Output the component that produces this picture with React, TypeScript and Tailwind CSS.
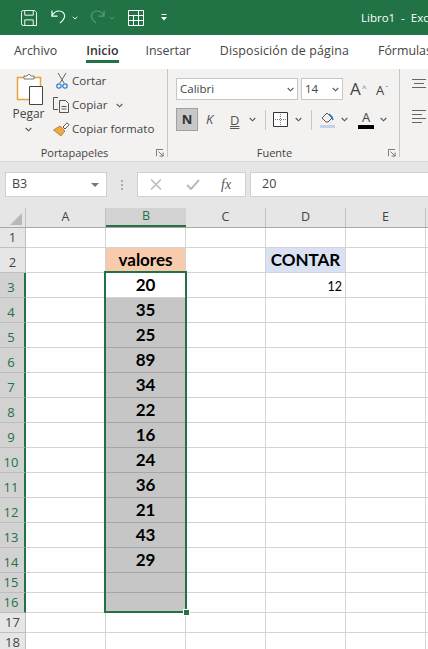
const ui = "font-['Open_Sans','Noto_Sans',sans-serif]";
const cols = ['A', 'B', 'C', 'D', 'E'];

const rows = [
  { n: 1, h: 'h-[20px]' },
  { n: 2, h: 'h-[25px]' },
  { n: 3, h: 'h-[25px]', b: '20', d: '12' },
  { n: 4, h: 'h-[25px]', b: '35' },
  { n: 5, h: 'h-[25px]', b: '25' },
  { n: 6, h: 'h-[25px]', b: '89' },
  { n: 7, h: 'h-[25px]', b: '34' },
  { n: 8, h: 'h-[25px]', b: '22' },
  { n: 9, h: 'h-[25px]', b: '16' },
  { n: 10, h: 'h-[25px]', b: '24' },
  { n: 11, h: 'h-[25px]', b: '36' },
  { n: 12, h: 'h-[25px]', b: '21' },
  { n: 13, h: 'h-[25px]', b: '43' },
  { n: 14, h: 'h-[25px]', b: '29' },
  { n: 15, h: 'h-[20px]' },
  { n: 16, h: 'h-[20px]' },
  { n: 17, h: 'h-[20px]' },
  { n: 18, h: 'h-[20px]' },
];

function Chev({ className }: { className?: string }) {
  return (
    <svg width="7" height="5" viewBox="0 0 7 5" className={`shrink-0 ${className ?? ''}`} fill="none" stroke="#555" strokeWidth="1.1">
      <path d="M.7 1 3.5 3.8 6.3 1" />
    </svg>
  );
}

function Launcher() {
  return (
    <svg width="8" height="8" viewBox="0 0 9 9" fill="none" stroke="#666" strokeWidth="1">
      <path d="M.5 8V.5H8M3 3l4.5 4.5M8 4v4H4" />
    </svg>
  );
}

function TitleBar() {
  return (
    <div className="h-[35px] bg-[#217346] flex items-center relative">
      <svg width="16" height="16" viewBox="0 0 17 17" fill="none" stroke="#fff" strokeWidth="1" className="ml-[21px] shrink-0">
        <path d="M.5 2.5a2 2 0 0 1 2-2h12l2 2v14h-14a2 2 0 0 1-2-2zM4 .5v5h9v-5M4 16.5v-6h9v6" />
      </svg>
      <svg width="15" height="17" viewBox="0 0 16 17" fill="none" stroke="#fff" strokeWidth="1.2" className="ml-[14px] shrink-0">
        <path d="M1 1v6h6M1 6.500C3 3 5.500 1.500 8.500 1.500c3.500 0 6 2.500 6 5.500 0 3-2.500 5.500-5 7.500" />
      </svg>
      <svg width="6" height="4" viewBox="0 0 7 5" fill="none" stroke="#fff" strokeWidth="1.2" className="ml-[6px] shrink-0">
        <path d="M.7 1 3.500 3.800 6.300 1" />
      </svg>
      <svg width="15" height="17" viewBox="0 0 16 17" fill="none" stroke="#5f9a7c" strokeWidth="1.2" className="ml-[12px] shrink-0">
        <path d="M15 1v6H9M15 6.500C13 3 10.500 1.500 7.500 1.500c-3.500 0-6 2.500-6 5.500 0 3 2.500 5.500 5 7.500" />
      </svg>
      <svg width="6" height="4" viewBox="0 0 7 5" fill="none" stroke="#5f9a7c" strokeWidth="1.2" className="ml-[4px] shrink-0">
        <path d="M.7 1 3.500 3.800 6.300 1" />
      </svg>
      <svg width="16" height="16" viewBox="0 0 16 16" fill="none" stroke="#fff" strokeWidth="1" className="ml-[13px] shrink-0">
        <path d="M.5.500h15v15H.5zM.5 5.500h15M.5 10.500h15M5.500 5.500v10M10.500.500v15" />
      </svg>
      <svg width="6" height="7" viewBox="0 0 6 7" fill="#fff" className="ml-[17px] shrink-0">
        <path d="M.5 0h5v1h-5zM0 3h6L3 6.500z" />
      </svg>
      <div className={`absolute left-[361px] top-[10px] text-[11.5px] leading-[16px] text-white whitespace-nowrap ${ui}`}>
        Libro1&nbsp; -&nbsp; Excel
      </div>
    </div>
  );
}

function Tabs() {
  return (
    <div className={`h-[34px] flex items-start text-[12.4px] text-[#444] whitespace-nowrap pl-[14px] overflow-hidden ${ui}`}>
      <span className="mt-[7px]">Archivo</span>
      <span className="ml-[29px] relative mt-[7px] font-semibold text-[#333]">
        Inicio
        <span className="absolute left-0 right-0 top-[18px] h-[3px] bg-[#217346]" />
      </span>
      <span className="ml-[27px] mt-[7px]">Insertar</span>
      <span className="ml-[29px] mt-[7px] tracking-[0.15px]">Disposición de página</span>
      <span className="ml-[29px] mt-[7px]">Fórmulas</span>
    </div>
  );
}

function Clipboard() {
  return (
    <div className={`w-[168px] shrink-0 border-r border-[#c8c6c4] flex flex-col text-[11.6px] text-[#444] ${ui}`}>
      <div className="flex h-[76px]">
        <div className="w-[57px] flex flex-col items-center">
          <svg width="28" height="32" viewBox="0 0 28 32" className="mt-[4px] ml-[2px]">
            <path d="M1.500 4.500h23v22H1.500z" fill="#fff" stroke="#e8a33d" strokeWidth="1.500" />
            <path d="M8 5V3h3l2-2 2 2h3v3H8z" fill="#fff" stroke="#777" />
            <path d="M13.500 13.500h13v18h-13z" fill="#fff" stroke="#444" />
          </svg>
          <span className="mt-[1px] leading-[16px] text-[12px]">Pegar</span>
          <Chev className="mt-[5px]" />
        </div>
        <div className="flex flex-col">
          <div className="h-[24px] flex items-center">
            <svg width="12" height="16" viewBox="0 0 12 16" fill="none" className="-ml-[1px] mr-[4px]">
              <path d="M2 0 8 10M10 0 4 10" stroke="#666" />
              <circle cx="3" cy="13" r="2.200" stroke="#2b7cd3" strokeWidth="1.200" />
              <circle cx="9" cy="13" r="2.200" stroke="#2b7cd3" strokeWidth="1.200" />
            </svg>
            <span>Cortar</span>
          </div>
          <div className="h-[24px] flex items-center -ml-[4px]">
            <svg width="17" height="16" viewBox="0 0 17 16" fill="none" stroke="#555" className="shrink-0">
              <path d="M5 .500H.500v12H5M6.500 3.500h6l3 3v9h-9zM8.500 9.500h5M8.500 12h5" />
            </svg>
            <span className="ml-[2px]">Copiar</span>
            <Chev className="ml-[9px]" />
          </div>
          <div className="h-[24px] flex items-center -ml-[4px]">
            <svg width="17" height="15" viewBox="0 0 17 15" className="shrink-0">
              <path d="M.500 8 7 4l5 5-4 5z" fill="#f0a74a" stroke="#a86a1c" strokeWidth=".7" />
              <path d="M10 5 14 .8l2 2L12 7z" fill="#fff" stroke="#555" />
            </svg>
            <span className="ml-[2px] whitespace-nowrap">Copiar formato</span>
          </div>
        </div>
      </div>
      <div className="h-[12px] relative leading-[16px] text-[11px] text-center pr-[18px]">
        Portapapeles
        <span className="absolute right-[3px] top-[4px] flex">
          <Launcher />
        </span>
      </div>
    </div>
  );
}

function Font() {
  return (
    <div className={`w-[232px] shrink-0 border-r border-[#c8c6c4] flex flex-col text-[#444] ${ui}`}>
      <div className="flex h-[76px] flex-col pl-[8px]">
        <div className="flex items-center h-[22px] mt-[9px]">
          <div className="w-[122px] h-[22px] bg-white border border-[#c8c6c4] flex items-center justify-between pl-[3px] pr-[3px] text-[11.5px]">
            Calibri
            <Chev />
          </div>
          <div className="ml-[3px] w-[42px] h-[22px] bg-white border border-[#c8c6c4] flex items-center justify-between pl-[3px] pr-[3px] text-[11.5px]">
            14
            <Chev />
          </div>
          <span className="ml-[7px] w-[12px] relative text-[17px] leading-[20px]">
            A<span className="absolute left-[12px] -top-[1px] text-[8px] text-[#666]">^</span>
          </span>
          <span className="ml-[14px] relative text-[13px] leading-[20px] mt-[1px]">
            A<span className="absolute left-[9px] -top-[2px] text-[8px] text-[#2b7cd3]">ˇ</span>
          </span>
        </div>
        <div className="flex items-center mt-[8px] h-[23px]">
          <div className="w-[22px] h-[23px] bg-[#c8c8c8] border border-[#a0a0a0] flex items-center justify-center text-[13px] font-bold text-[#333]">
            N
          </div>
          <span className="ml-[8px] w-[14px] italic text-[13px] text-[#555]">K</span>
          <span className="ml-[10px] w-[10px] text-[13px] underline decoration-double text-[#555] leading-[18px]">D</span>
          <Chev className="ml-[9px]" />
          <span className="ml-[9px] h-[20px] w-px bg-[#c8c6c4] shrink-0" />
          <svg width="15" height="15" viewBox="0 0 15 15" fill="#fff" stroke="#333" className="ml-[7px] shrink-0">
            <path d="M.500.500h14v14H.500z" />
            <path d="M7.500 2v11M2 7.500h11" stroke="#777" strokeDasharray="1 1" />
          </svg>
          <Chev className="ml-[7px]" />
          <span className="ml-[9px] h-[20px] w-px bg-[#c8c6c4] shrink-0" />
          <svg width="15" height="18" viewBox="0 0 15 18" className="ml-[8px] shrink-0" fill="none">
            <path d="M2 7l5-5 5 5-4 4h-2z" stroke="#555" />
            <path d="M9 3l3 3 1 3" stroke="#2b7cd3" strokeWidth="1.500" />
            <path d="M0 14h15v3H0z" fill="#c5d3ea" />
          </svg>
          <Chev className="ml-[6px]" />
          <span className="ml-[10px] flex flex-col items-center w-[16px] text-[13px] leading-[14px] shrink-0">
            A
            <span className="block w-[16px] h-[4px] bg-black mt-[1px]" />
          </span>
          <Chev className="ml-[6px]" />
        </div>
      </div>
      <div className="h-[12px] relative leading-[16px] text-[11px] text-center pr-[18px]">
        Fuente
        <span className="absolute right-[3px] top-[4px] flex">
          <Launcher />
        </span>
      </div>
    </div>
  );
}

function Ribbon() {
  return (
    <div className="h-[93px] bg-[#f3f2f1] border-b border-[#d8d6d4] flex items-start overflow-hidden">
      <div className="flex h-[88px]">
        <Clipboard />
        <Font />
      </div>
      <svg width="14" height="45" viewBox="0 0 14 45" fill="none" stroke="#666" className="ml-[12px] mt-[10px] shrink-0">
        <path d="M0 .5h14M2 4.500h10M0 8.500h14M0 31.500h14M0 35.500h10M0 39.500h14M0 43.500h10" />
      </svg>
    </div>
  );
}

function FormulaBar() {
  return (
    <div className={`h-[46px] bg-[#e6e6e6] flex items-start pt-[10px] text-[12.5px] text-[#444] ${ui}`}>
      <div className="ml-[5px] w-[102px] h-[25px] bg-white border border-[#d0d0d0] flex items-center justify-between pl-[6px] pr-[7px]">
        B3
        <span className="w-0 h-0 border-x-[4px] border-x-transparent border-t-[4px] border-t-[#777]" />
      </div>
      <div className="w-[30px] h-[25px] flex flex-col items-center justify-center gap-[2px]">
        <span className="w-[2px] h-[2px] bg-[#aaa]" />
        <span className="w-[2px] h-[2px] bg-[#aaa]" />
        <span className="w-[2px] h-[2px] bg-[#aaa]" />
      </div>
      <div className="w-[109px] h-[25px] bg-white border border-[#d0d0d0] flex items-center">
        <svg width="12" height="11" viewBox="0 0 12 11" fill="none" stroke="#bbb" strokeWidth="1.500" className="ml-[12px]">
          <path d="m1 .5 10 10M11 .5l-10 10" />
        </svg>
        <svg width="14" height="11" viewBox="0 0 14 11" fill="none" stroke="#bbb" strokeWidth="2" className="ml-[24px]">
          <path d="m1 6 4 4 8-9" />
        </svg>
        <span className="ml-[21px] font-['Liberation_Serif',serif] italic text-[14px] text-[#555]">
          fx
        </span>
      </div>
      <div className="ml-[4px] flex-1 h-[25px] bg-white border border-[#d0d0d0] border-r-0 flex items-center pl-[11px]">
        20
      </div>
    </div>
  );
}

function HeaderRow() {
  return (
    <div className={`h-[20px] flex bg-[#e6e6e6] text-[12.5px] text-[#444] border-b border-[#a8a8a8] ${ui}`}>
      <div className="w-[26px] shrink-0 border-r border-[#c0c0c0] relative overflow-hidden">
        <span className="absolute right-[3px] bottom-[2px] w-0 h-0 border-l-[12px] border-l-transparent border-b-[12px] border-b-[#b8b8b8]" />
      </div>
      {cols.map((c) => (
        <div
          key={c}
          className={
            c === 'B'
              ? 'w-[80px] shrink-0 bg-[#d2d2d2] border-b-2 border-[#217346] text-[#217346] flex items-center justify-center'
              : 'w-[80px] shrink-0 border-r border-[#c0c0c0] flex items-center justify-center'
          }
        >
          {c}
        </div>
      ))}
      <div className="flex-1" />
    </div>
  );
}

function Row({ r }: { r: (typeof rows)[number] }) {
  const sel = r.n >= 3 && r.n <= 16;
  const gray = r.n >= 4 && r.n <= 16;
  const cell = 'w-[80px] shrink-0 border-r border-b border-[#d4d4d4]';
  const big = "flex items-end justify-center text-[17px] leading-[24px] font-bold text-black font-['Lato',sans-serif]";
  return (
    <div className={`flex ${r.h}`}>
      <div
        className={
          sel
            ? `w-[26px] shrink-0 bg-[#d2d2d2] border-r-2 border-b border-r-[#217346] border-b-[#bdbdbd] text-[#217346] text-[13px] flex items-end justify-center pr-[2px] ${ui}`
            : `w-[26px] shrink-0 bg-[#e6e6e6] border-r border-b border-[#c0c0c0] text-[#444] text-[13px] flex items-end justify-center ${ui}`
        }
      >
        {r.n}
      </div>
      <div className={cell} />
      <div
        className={
          r.n === 2
            ? `${cell} bg-[#f8cbad] ${big}`
            : gray
              ? `w-[80px] shrink-0 border-r border-b border-[#a6a6a6] bg-[#c6c6c6] ${big}`
              : `${cell} ${big}`
        }
      >
        {r.n === 2 ? 'valores' : r.b}
      </div>
      <div className={cell} />
      <div
        className={
          r.n === 2
            ? `${cell} bg-[#d9e1f2] ${big}`
            : `${cell} flex items-end justify-end pr-[3px] text-[12.5px] leading-[21px] text-black font-['Lato',sans-serif]`
        }
      >
        {r.n === 2 ? 'CONTAR' : r.d}
      </div>
      <div className={cell} />
      <div className="flex-1 border-b border-[#d4d4d4]" />
    </div>
  );
}

export default function App() {
  return (
    <div className="w-[428px] h-[649px] overflow-hidden bg-white relative">
      <TitleBar />
      <Tabs />
      <Ribbon />
      <FormulaBar />
      <HeaderRow />
      <div>
        {rows.map((r) => (
          <Row key={r.n} r={r} />
        ))}
      </div>
      {/* selection box over B3:B16 */}
      <div className="absolute left-[104px] top-[271px] w-[83px] h-[342px] border-2 border-[#217346] pointer-events-none" />
      <div className="absolute left-[183px] top-[609px] w-[5px] h-[5px] bg-[#217346] border border-white box-content" />
    </div>
  );
}
